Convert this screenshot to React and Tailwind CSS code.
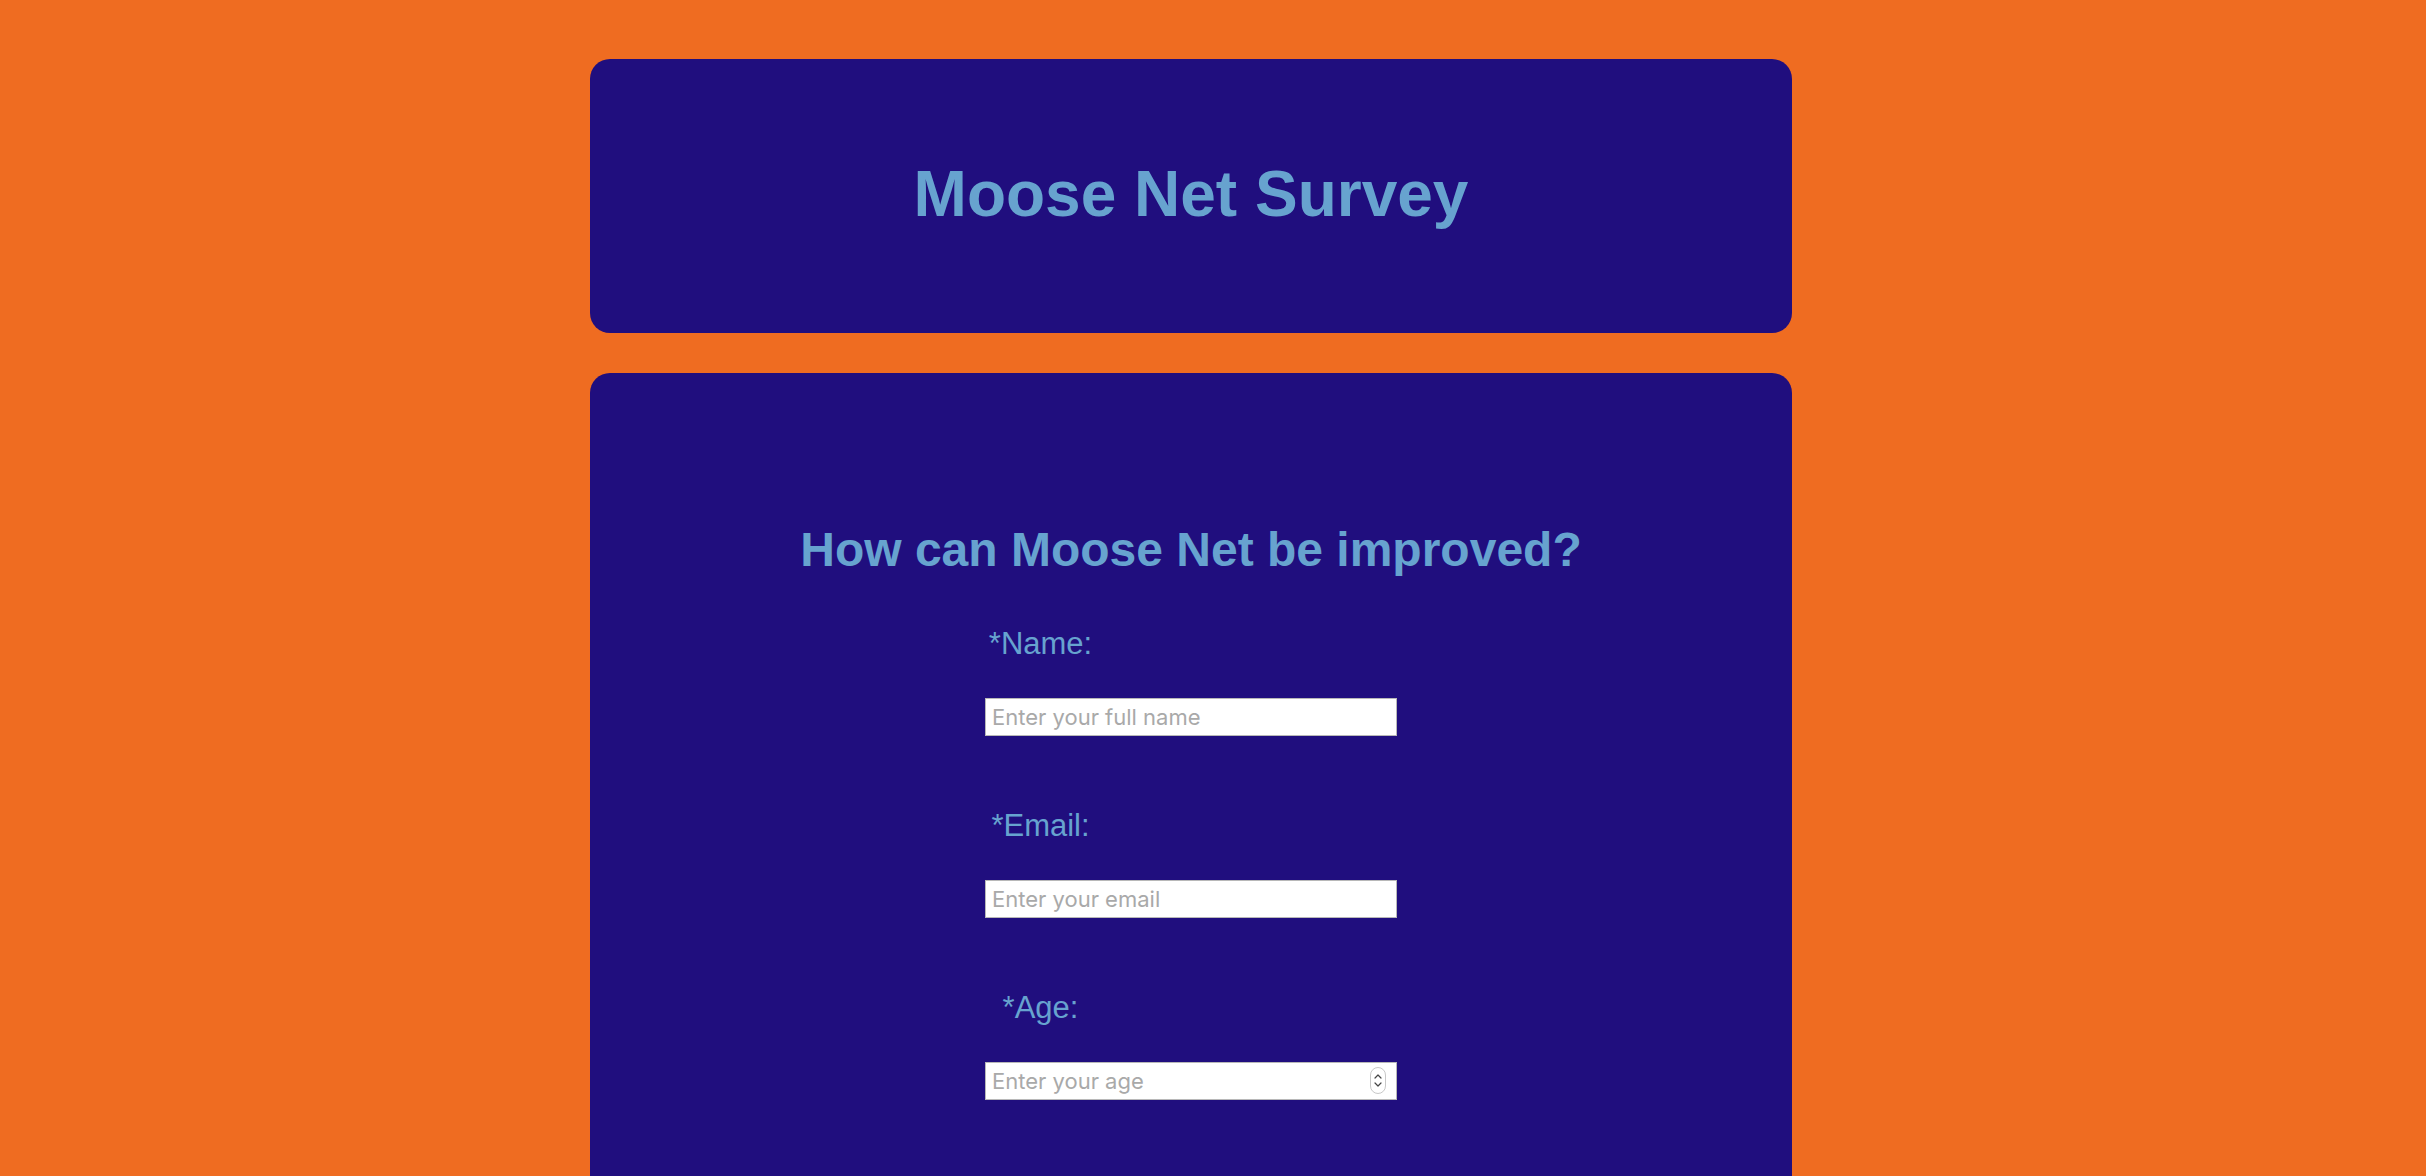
export default function App() {
  const labelCls =
    "block w-[111px] text-center text-[31px] leading-[36px] text-[#67a3cf] font-['Liberation_Sans',Arial,sans-serif]";
  const inputCls =
    "block w-[412px] h-[38px] mt-[36px] bg-white border border-[#b8b8b8] pl-[6px] text-[22px] text-black placeholder:text-[#a9a9a9] font-['Inter','Noto_Sans',sans-serif] outline-none";
  return (
    <div className="min-h-screen bg-[#ef6c21] pt-[59px] pb-[40px] font-['Liberation_Sans',Arial,sans-serif]">
      <div className="ml-[590px] w-[1202px] h-[274px] rounded-[20px] bg-[#200e7e] flex items-center justify-center">
        <h1 className="text-[64px] font-bold leading-[74px] text-[#67a3cf] mt-[-4px]">
          Moose Net Survey
        </h1>
      </div>
      <div className="ml-[590px] mt-[40px] w-[1202px] rounded-[20px] bg-[#200e7e] pt-[149px] pb-[200px]">
        <h2 className="text-center text-[48px] font-bold leading-[55px] text-[#67a3cf]">
          How can Moose Net be improved?
        </h2>
        <form className="w-[412px] mx-auto mt-[49px]">
          <label className={labelCls}>*Name:</label>
          <input type="text" placeholder="Enter your full name" className={inputCls} />
          <label className={labelCls + " mt-[72px]"}>*Email:</label>
          <input type="text" placeholder="Enter your email" className={inputCls} />
          <label className={labelCls + " mt-[72px]"}>*Age:</label>
          <div className="relative">
            <input type="text" placeholder="Enter your age" className={inputCls} />
            <div className="absolute right-[11px] top-[5px] w-[16px] h-[27px] rounded-full border border-[#c8c8c8] bg-white flex flex-col items-center justify-center gap-[3px]">
              <svg width="8" height="5" viewBox="0 0 8 5" fill="none">
                <path d="M1 4L4 1L7 4" stroke="#444" strokeWidth="1.2" strokeLinecap="round" strokeLinejoin="round" />
              </svg>
              <svg width="8" height="5" viewBox="0 0 8 5" fill="none">
                <path d="M1 1L4 4L7 1" stroke="#444" strokeWidth="1.2" strokeLinecap="round" strokeLinejoin="round" />
              </svg>
            </div>
          </div>
        </form>
      </div>
    </div>
  );
}
